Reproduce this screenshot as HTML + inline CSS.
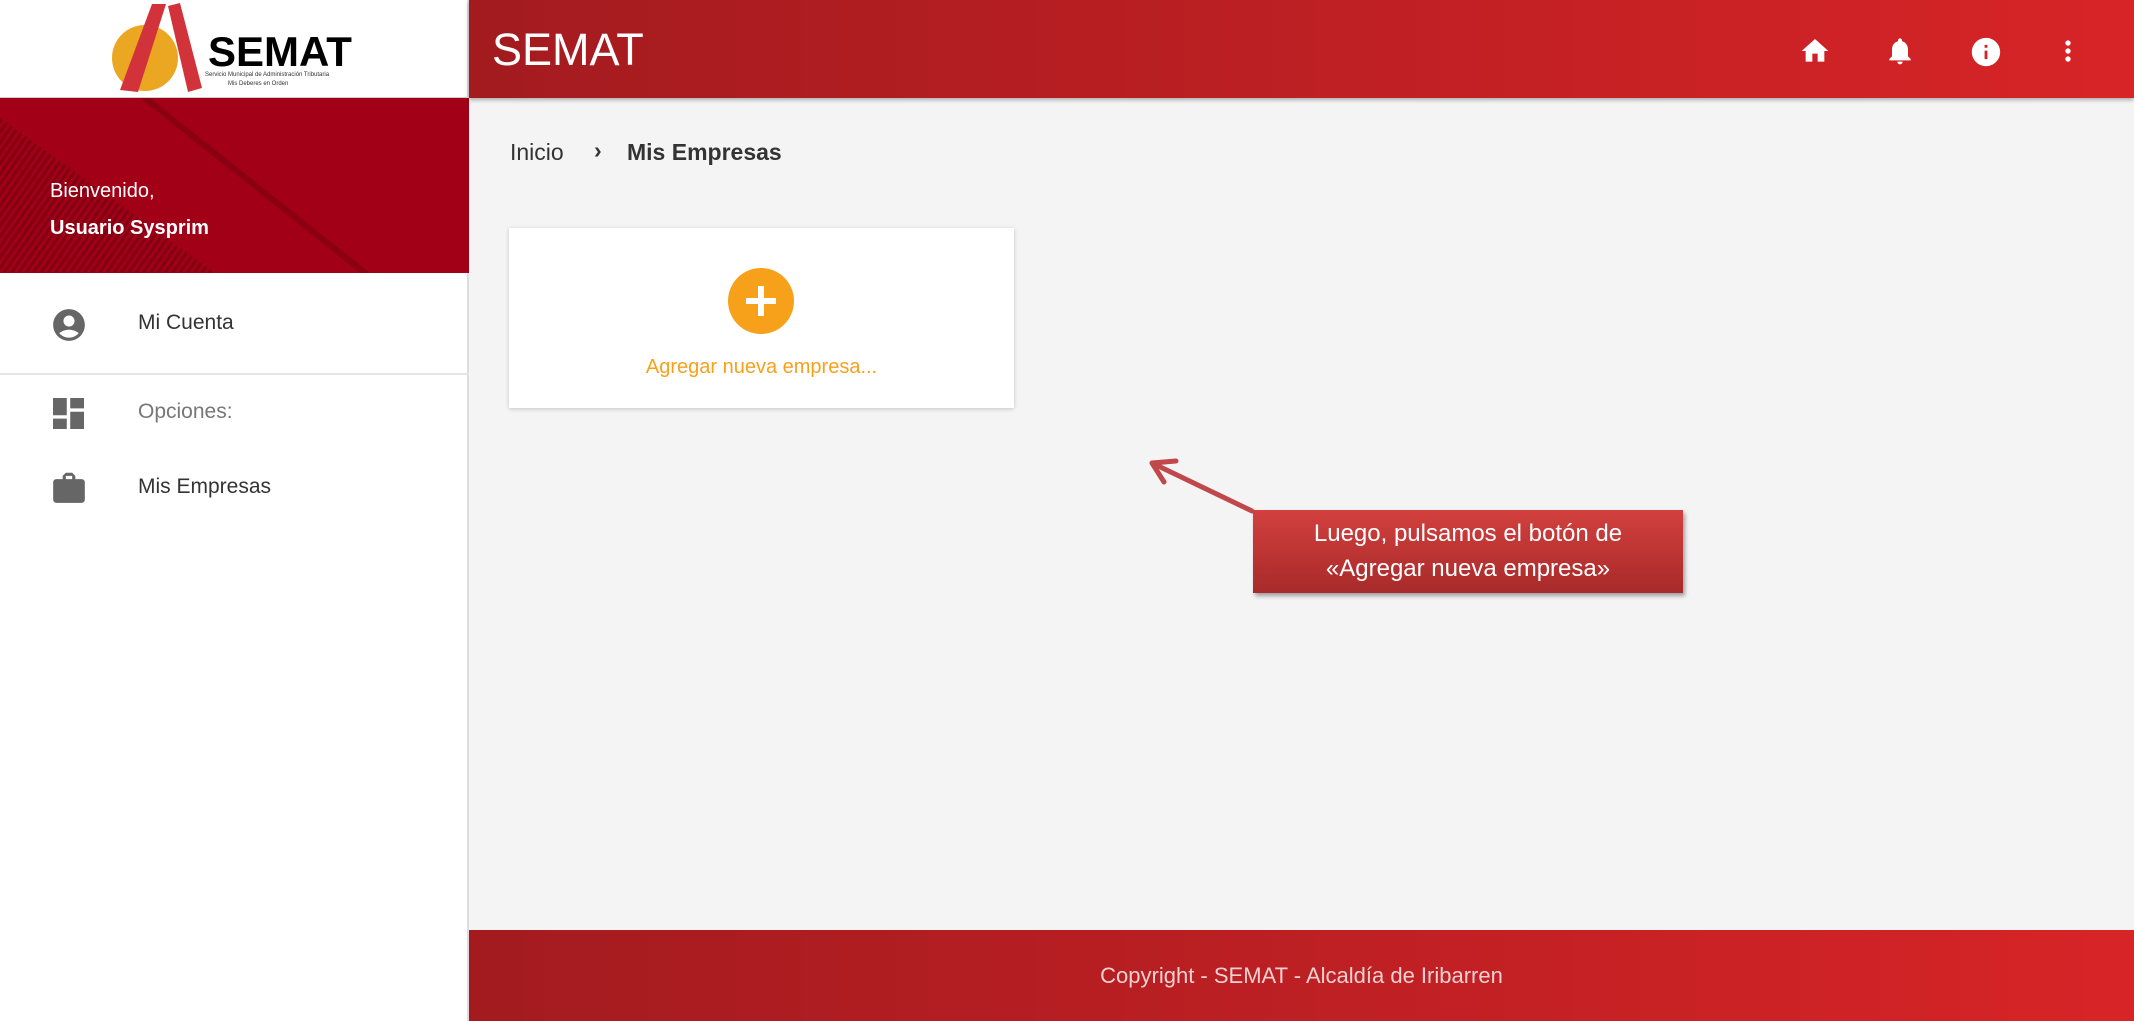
<!DOCTYPE html>
<html><head><meta charset="utf-8"><style>
*{margin:0;padding:0;box-sizing:border-box}
body{width:2134px;height:1021px;background:#f4f4f4;font-family:"Liberation Sans",sans-serif;position:relative;overflow:hidden}
.side{position:absolute;left:0;top:0;width:469px;height:1021px;background:#fff;border-right:2px solid #ddd}
.logo{height:98px;border-bottom:1px solid #ccc;position:relative}
.banner{position:absolute;top:98px;left:0;width:469px;height:175px;background:#a10016;overflow:hidden}
.top{position:absolute;left:469px;top:0;right:0;height:98px;background:linear-gradient(90deg,#a31b1f,#d72427);box-shadow:0 2px 4px rgba(0,0,0,.3)}
.foot{position:absolute;left:469px;top:930px;right:0;height:91px;background:linear-gradient(90deg,#a31b1f,#d72427);color:#f0d0d0;font-size:22px;text-align:center;line-height:91px}
.item{position:absolute;left:138px;font-size:21px;color:#333}
</style></head><body>
<div class="side">
 <div class="logo">
  <svg width="469" height="98" viewBox="0 0 469 98">
   <ellipse cx="145" cy="58" rx="33" ry="33" fill="#eba722"/>
   <path d="M120 90 L152 4 L166 4 L138 92 Z" fill="#d2333b"/>
   <path d="M168 6 L180 3 L202 88 L188 92 Z" fill="#d2333b"/>
   <text x="208" y="66" font-family="Liberation Sans" font-weight="bold" font-size="42" fill="#000">SEMAT</text>
   <text x="205" y="76" font-size="6" fill="#333">Servicio Municipal de Administración Tributaria</text>
   <text x="228" y="85" font-size="6" fill="#333">Mis Deberes en Orden</text>
  </svg>
 </div>
 <div class="banner">
  <svg width="469" height="175"><defs><pattern id="p" width="6" height="6" patternUnits="userSpaceOnUse" patternTransform="rotate(35)"><rect width="3" height="6" fill="#7a0010"/></pattern></defs>
   <path d="M0 0 L0 175 L215 175 L0 20Z" fill="url(#p)" opacity=".8"/>
   <path d="M150 0 L370 175 L360 175 L140 0Z" fill="#6a000c" opacity=".4"/>
  </svg>
  <div style="position:absolute;left:50px;top:82px;color:#fff;font-size:20px">Bienvenido,</div>
  <div style="position:absolute;left:50px;top:119px;color:#fff;font-size:20px;font-weight:bold">Usuario Sysprim</div>
 </div>
 <svg style="position:absolute;left:50px;top:306px" width="38" height="38" viewBox="0 0 24 24"><path fill="#666" d="M12 2C6.48 2 2 6.48 2 12s4.48 10 10 10 10-4.48 10-10S17.52 2 12 2zm0 4c1.93 0 3.5 1.57 3.5 3.5S13.930 13 12 13s-3.5-1.57-3.5-3.5S10.07 6 12 6zm0 14c-2.03 0-4.43-.82-6.14-2.88C7.55 15.8 9.68 15 12 15s4.45.8 6.14 2.12C16.43 19.18 14.03 20 12 20z"/></svg>
 <div class="item" style="top:311px">Mi Cuenta</div>
 <div style="position:absolute;left:0;top:373px;width:469px;height:2px;background:#e4e4e4"></div>
 <svg style="position:absolute;left:53px;top:398px" width="31" height="31" viewBox="3 3 18 18"><path fill="#666" d="M3 13h8V3H3v10zm0 8h8v-6H3v6zm10 0h8V11h-8v10zm0-18v6h8V3h-8z"/></svg>
 <div class="item" style="top:400px;color:#777">Opciones:</div>
 <svg style="position:absolute;left:50px;top:468px" width="38" height="38" viewBox="0 0 24 24"><path fill="#666" d="M20 7h-4V5l-2-2h-4L8 5v2H4c-1.1 0-2 .9-2 2v11c0 1.1.9 2 2 2h16c1.1 0 2-.9 2-2V9c0-1.1-.9-2-2-2zm-6 0h-4V5h4v2z"/></svg>
 <div class="item" style="top:475px">Mis Empresas</div>
</div>
<div class="top">
 <div style="position:absolute;left:23px;top:24px;color:#fff;font-size:45px">SEMAT</div>
 <svg style="position:absolute;left:1330px;top:35px" width="32" height="32" viewBox="0 0 24 24"><path fill="#fff" d="M10 20v-6h4v6h5v-8h3L12 3 2 12h3v8z"/></svg>
 <svg style="position:absolute;left:1415px;top:35px" width="32" height="32" viewBox="0 0 24 24"><path fill="#fff" d="M12 22c1.1 0 2-.9 2-2h-4c0 1.1.89 2 2 2zm6-6v-5c0-3.070-1.64-5.64-4.5-6.32V4c0-.83-.67-1.5-1.5-1.5s-1.5.67-1.5 1.5v.68C7.63 5.36 6 7.92 6 11v5l-2 2v1h16v-1l-2-2z"/></svg>
 <svg style="position:absolute;left:1500px;top:35px" width="34" height="34" viewBox="0 0 24 24"><path fill="#fff" d="M12 2C6.48 2 2 6.48 2 12s4.48 10 10 10 10-4.48 10-10S17.52 2 12 2zm1 15h-2v-6h2v6zm0-8h-2V7h2v2z"/></svg>
 <svg style="position:absolute;left:1583px;top:35px" width="32" height="32" viewBox="0 0 24 24"><path fill="#fff" d="M12 8c1.1 0 2-.9 2-2s-.9-2-2-2-2 .9-2 2 .9 2 2 2zm0 2c-1.1 0-2 .9-2 2s.9 2 2 2 2-.9 2-2-.9-2-2-2zm0 6c-1.1 0-2 .9-2 2s.9 2 2 2 2-.9 2-2-.9-2-2-2z"/></svg>
</div>
<div style="position:absolute;left:510px;top:139px;font-size:23px;color:#333">Inicio</div>
<div style="position:absolute;left:594px;top:137px;font-size:23px;color:#333;font-weight:bold">›</div>
<div style="position:absolute;left:627px;top:139px;font-size:23px;color:#333;font-weight:bold">Mis Empresas</div>
<div style="position:absolute;left:509px;top:228px;width:505px;height:180px;background:#fff;box-shadow:0 1px 4px rgba(0,0,0,.2)">
 <svg style="position:absolute;left:219px;top:40px" width="66" height="66" viewBox="0 0 66 66"><circle cx="33" cy="33" r="33" fill="#f7a11a"/><path d="M33 18v30M18 33h30" stroke="#fff" stroke-width="6"/></svg>
 <div style="position:absolute;left:0;width:505px;top:128px;text-align:center;color:#f7a11a;font-size:20px">Agregar nueva empresa...</div>
</div>
<svg style="position:absolute;left:0;top:0" width="2134" height="1021"><path d="M1252 511 L1152 463 M1152 463 L1176 461 M1152 463 L1164 482" stroke="#c0474a" stroke-width="5" fill="none" stroke-linecap="round"/></svg>
<div style="position:absolute;left:1253px;top:510px;width:430px;height:83px;background:linear-gradient(#d2403e,#a82a2a);box-shadow:2px 3px 4px rgba(0,0,0,.35);color:#fff;font-size:24px;text-align:center;line-height:35px;padding-top:6px">Luego, pulsamos el botón de<br>«Agregar nueva empresa»</div>
<div class="foot">Copyright - SEMAT - Alcaldía de Iribarren</div>
</body></html>
